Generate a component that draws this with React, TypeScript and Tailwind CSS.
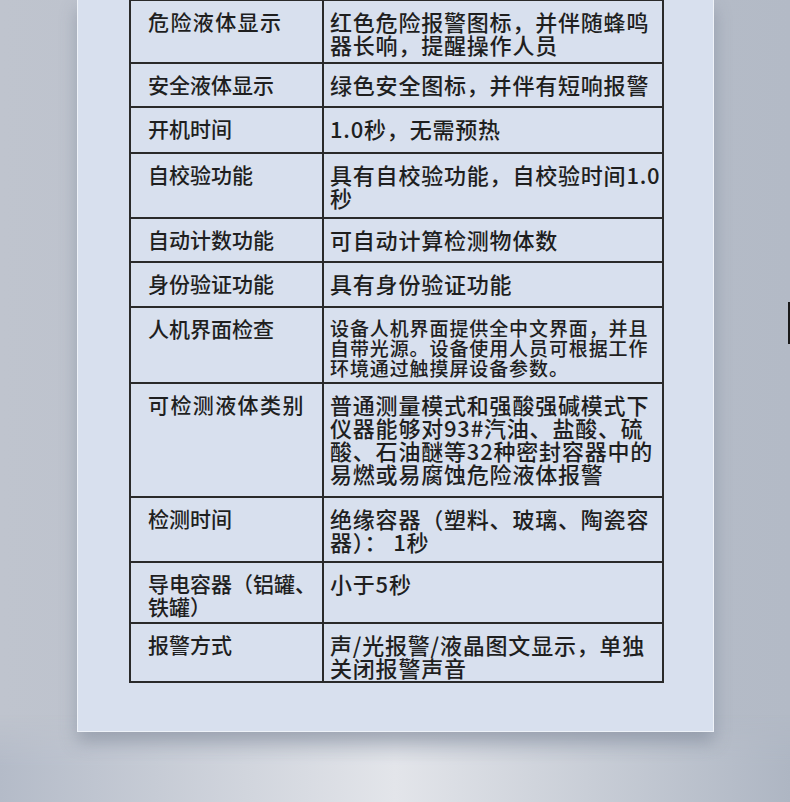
import React from 'react';

type Row = { h: string; label: string; value: string; small?: boolean; wideLabel?: boolean };

const rows: Row[] = [
  { h: 'h-[63px]', label: '危险液体显示', value: '红色危险报警图标，并伴随蜂鸣\n器长响，提醒操作人员', wideLabel: true },
  { h: 'h-[44px]', label: '安全液体显示', value: '绿色安全图标，并伴有短响报警' },
  { h: 'h-[46px]', label: '开机时间', value: '1.0秒，无需预热' },
  { h: 'h-[65px]', label: '自校验功能', value: '具有自校验功能，自校验时间1.0\n秒' },
  { h: 'h-[44px]', label: '自动计数功能', value: '可自动计算检测物体数' },
  { h: 'h-[45px]', label: '身份验证功能', value: '具有身份验证功能' },
  {
    h: 'h-[76px]',
    label: '人机界面检查',
    value: '设备人机界面提供全中文界面，并且\n自带光源。设备使用人员可根据工作\n环境通过触摸屏设备参数。',
    small: true,
  },
  {
    h: 'h-[114px]',
    label: '可检测液体类别',
    value: '普通测量模式和强酸强碱模式下\n仪器能够对93#汽油、盐酸、硫\n酸、石油醚等32种密封容器中的\n易燃或易腐蚀危险液体报警',
    wideLabel: true,
  },
  { h: 'h-[65px]', label: '检测时间', value: '绝缘容器（塑料、玻璃、陶瓷容\n器）： 1秒' },
  { h: 'h-[61px]', label: '导电容器（铝罐、\n铁罐）', value: '小于5秒' },
  { h: 'h-[57px]', label: '报警方式', value: '声/光报警/液晶图文显示，单独\n关闭报警声音' },
];

export default function App() {
  return (
    <div
      className="relative w-[790px] h-[802px] overflow-hidden bg-gradient-to-r from-[#bfc4ce] via-[#b9bfcb] to-[#b3bac6] text-[#1f1f1f]"
      style={{ fontFamily: '"Noto Sans CJK SC", "Noto Sans", sans-serif' }}
    >
      {/* floor below the panel, faded in from the top */}
      <div className="absolute left-0 right-0 top-[715px] bottom-0 bg-gradient-to-r from-[#b4bbc8] via-[#e3e5ea] to-[#aeb6c3] [mask-image:linear-gradient(to_bottom,transparent,black_50px)]" />

      {/* spec sheet panel */}
      <div className="relative ml-[77px] w-[637px] h-[733px] bg-[#d8e0ee] border-x border-b border-[#eef2f8] shadow-[0_10px_16px_rgba(90,100,120,0.35)]">
        <div className="ml-[51px] w-[535px] border-2 border-[#2a2a2a] -mt-px">
          {rows.map((r, i) => (
            <div
              key={i}
              className={`grid grid-cols-[193px_338px] ${r.h} ${i < rows.length - 1 ? 'border-b-2 border-[#2a2a2a]' : ''}`}
            >
              <div
                className={`border-r-2 border-[#2a2a2a] pl-[17px] pt-[9px] text-[21px] leading-[23px] font-medium whitespace-pre-line ${
                  r.wideLabel ? 'tracking-[1.4px]' : ''
                }`}
              >
                {r.label}
              </div>
              <div
                className={`pl-[6px] whitespace-pre-line font-medium ${
                  r.small
                    ? 'pt-[10px] text-[19px] leading-[20px] tracking-[0.9px]'
                    : 'pt-[9px] text-[22px] leading-[23px] tracking-[0.8px]'
                }`}
              >
                {r.value}
              </div>
            </div>
          ))}
        </div>
      </div>

      {/* edge marker on the right */}
      <div className="absolute right-0 top-[302px] w-[2px] h-[42px] bg-[#1a1a1a]" />
    </div>
  );
}
